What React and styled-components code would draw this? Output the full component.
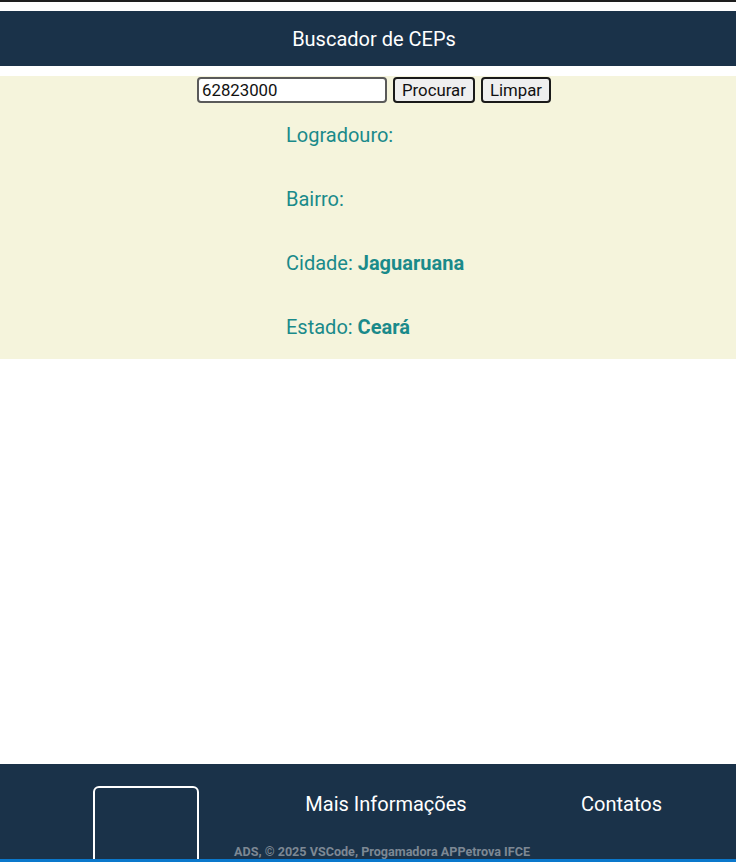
import * as React from "react";
import styled, { createGlobalStyle } from "styled-components";

const GlobalStyle = createGlobalStyle`
  body {
    margin: 0;
    font-family: Roboto, "Liberation Sans", sans-serif;
    background: #ffffff;
  }
`;

const TopLine = styled.div`
  height: 2px;
  background: #1e1e1e;
  margin-bottom: 9px;
`;

const Header = styled.header`
  height: 55px;
  background: #1a3249;
  display: flex;
  align-items: center;
  justify-content: center;
  padding-left: 12px;

  h1 {
    margin: 0;
    color: #ffffff;
    font-size: 20px;
    font-weight: 400;
  }
`;

const SearchSection = styled.section`
  margin-top: 10px;
  background: #f5f4dc;
  padding: 1px 0 20px;
  min-height: 262px;
`;

const SearchForm = styled.form`
  display: flex;
  justify-content: center;
  gap: 6px;
  padding-left: 12px;
`;

const CepInput = styled.input`
  width: 190px;
  height: 26px;
  box-sizing: border-box;
  border: 2px solid #5a5a5a;
  border-radius: 4px;
  padding: 1px 3px;
  font-family: Roboto, "Liberation Sans", sans-serif;
  font-size: 16.8px;
  color: #111;
  background: #fff;
`;

const FormButton = styled.button`
  height: 26px;
  box-sizing: border-box;
  border: 2px solid #1a1a1a;
  border-radius: 4px;
  padding: 0 7px;
  background: #efefef;
  font-family: Roboto, "Liberation Sans", sans-serif;
  font-size: 16.8px;
  color: #111;
`;

const Results = styled.div`
  padding-left: 286px;
  padding-top: 20px;
  display: flex;
  flex-direction: column;
  gap: 40px;
`;

const ResultLine = styled.p`
  margin: 0;
  font-size: 20px;
  line-height: 24px;
  color: #1a8a8a;

  strong {
    font-weight: 700;
  }
`;

const Spacer = styled.div`
  height: 405px;
`;

const Footer = styled.footer`
  background: #1a3249;
  height: 98px;
  display: flex;
  padding-left: 93px;
  padding-top: 22px;
  box-sizing: border-box;
  overflow: hidden;
  border-bottom: 3px solid #0a78cc;
`;

const LogoBox = styled.div`
  width: 106px;
  height: 110px;
  box-sizing: border-box;
  border: 2px solid #ffffff;
  border-radius: 6px;
  flex-shrink: 0;
`;

const FooterMiddle = styled.div`
  margin-left: 35px;
  width: 304px;
  display: flex;
  flex-direction: column;
`;

const FooterTitle = styled.h2`
  margin: 6px 0 0;
  font-size: 20px;
  line-height: 24px;
  font-weight: 400;
  color: #ffffff;
  text-align: center;
`;

const Credits = styled.p`
  margin: 28px 0 0;
  font-size: 12.6px;
  font-weight: 700;
  color: #7d8894;
  white-space: nowrap;
`;

const FooterRight = styled.div`
  margin-left: 43px;
  width: 80px;
`;

export default function App() {
  return (
    <>
      <GlobalStyle />
      <TopLine />
      <Header>
        <h1>Buscador de CEPs</h1>
      </Header>
      <SearchSection>
        <SearchForm onSubmit={(e) => e.preventDefault()}>
          <CepInput type="text" defaultValue="62823000" />
          <FormButton type="submit">Procurar</FormButton>
          <FormButton type="button">Limpar</FormButton>
        </SearchForm>
        <Results>
          <ResultLine>Logradouro: </ResultLine>
          <ResultLine>Bairro: </ResultLine>
          <ResultLine>
            Cidade: <strong>Jaguaruana</strong>
          </ResultLine>
          <ResultLine>
            Estado: <strong>Ceará</strong>
          </ResultLine>
        </Results>
      </SearchSection>
      <Spacer />
      <Footer>
        <LogoBox />
        <FooterMiddle>
          <FooterTitle>Mais Informações</FooterTitle>
          <Credits>ADS, © 2025 VSCode, Progamadora APPetrova IFCE</Credits>
        </FooterMiddle>
        <FooterRight>
          <FooterTitle>Contatos</FooterTitle>
        </FooterRight>
      </Footer>
    </>
  );
}
